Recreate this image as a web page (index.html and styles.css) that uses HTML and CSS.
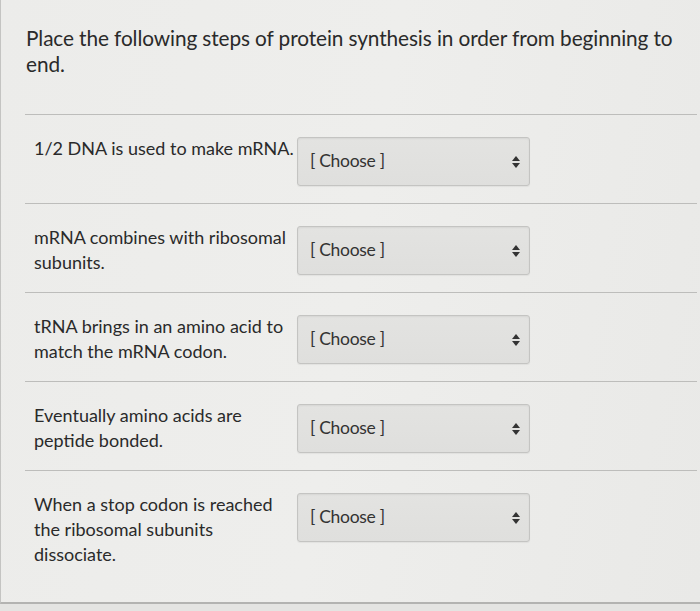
FILE: index.html
```html
<!DOCTYPE html>
<html>
<head>
<meta charset="utf-8">
<link rel="stylesheet" href="styles.css">
</head>
<body>
<div class="card">
  <p class="question">Place the following steps of protein synthesis in order from beginning to end.</p>
  <div class="rows">
    <div class="row">
      <div class="label">1/2 DNA is used to make mRNA.</div>
      <div class="select"><span>[ Choose ]</span><span class="arrows"></span></div>
    </div>
    <div class="row">
      <div class="label">mRNA combines with ribosomal subunits.</div>
      <div class="select"><span>[ Choose ]</span><span class="arrows"></span></div>
    </div>
    <div class="row">
      <div class="label">tRNA brings in an amino acid to match the mRNA codon.</div>
      <div class="select"><span>[ Choose ]</span><span class="arrows"></span></div>
    </div>
    <div class="row">
      <div class="label">Eventually amino acids are peptide bonded.</div>
      <div class="select"><span>[ Choose ]</span><span class="arrows"></span></div>
    </div>
    <div class="row last">
      <div class="label">When a stop codon is reached the ribosomal subunits dissociate.</div>
      <div class="select"><span>[ Choose ]</span><span class="arrows"></span></div>
    </div>
  </div>
</div>
</body>
</html>
```
FILE: styles.css
```css
html, body {
  margin: 0;
  padding: 0;
  background: #e4e4e2;
}
body {
  font-family: Lato, "Open Sans", sans-serif;
  color: #2a2a2a;
  width: 700px;
  height: 611px;
  overflow: hidden;
}
.card {
  height: 604px;
  box-sizing: border-box;
  border-left: 1px solid #c4c4c2;
  border-bottom: 2px solid #b3b3b1;
  background: linear-gradient(100deg, #ececea 0%, #eeeeec 50%, #e9e9e7 100%);
  padding-left: 24px;
  padding-right: 3px;
}
.question {
  margin: 0;
  padding: 25px 0 0 1px;
  font-size: 20.8px;
  line-height: 26px;
  letter-spacing: -0.1px;
  height: 114px;
  box-sizing: border-box;
}
.rows {
  border-top: 1px solid #bdbdbb;
}
.row {
  display: flex;
  align-items: flex-start;
  padding: 22px 0 17px 9px;
  border-bottom: 1px solid #bdbdbb;
}
.row.last {
  border-bottom: none;
}
.label {
  width: 260px;
  font-size: 18px;
  line-height: 25px;
  margin-top: -1px;
}
.select {
  margin-left: 3px;
  width: 233px;
  height: 49px;
  box-sizing: border-box;
  border: 1px solid #c4c4c2;
  border-radius: 3px;
  background: linear-gradient(180deg, #e3e3e1 0%, #dfdfdd 100%);
  box-shadow: inset 0 1px 2px rgba(0,0,0,0.06), 0 1px 1px rgba(0,0,0,0.05);
  display: flex;
  align-items: center;
  justify-content: space-between;
  padding: 0 9px 0 12px;
  font-size: 17.5px;
  letter-spacing: -0.3px;
  color: #333;
}
.select span:first-child {
  margin-top: -2px;
}
.arrows {
  width: 8px;
  height: 12px;
  position: relative;
}
.arrows::before, .arrows::after {
  content: "";
  position: absolute;
  left: 0;
  border-left: 4px solid transparent;
  border-right: 4px solid transparent;
}
.arrows::before {
  top: 0;
  border-bottom: 5px solid #333;
}
.arrows::after {
  bottom: 0;
  border-top: 5px solid #333;
}
```
